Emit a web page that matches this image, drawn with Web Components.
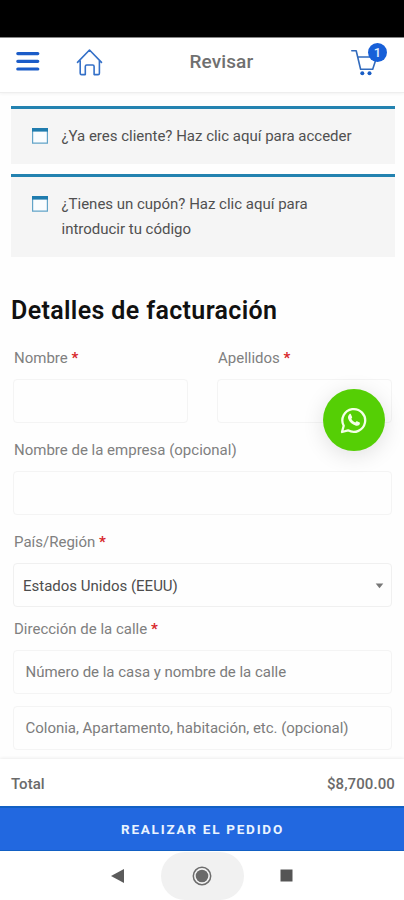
<!DOCTYPE html>
<html lang="es">
<head>
<meta charset="utf-8">
<title>Revisar</title>
<style>
html, body { margin: 0; height: 100%; overflow: hidden; background: #fff; }
body { font-family: Roboto, "Liberation Sans", sans-serif; }
</style>
</head>
<body>
<checkout-screen></checkout-screen>
<script>
function define(name, html) {
  const t = document.createElement('template');
  t.innerHTML = html;
  customElements.define(name, class extends HTMLElement {
    constructor() {
      super();
      this.attachShadow({ mode: 'open' }).append(t.content.cloneNode(true));
    }
  });
}

define('app-header', `
<style>
:host { display: grid; grid-template-columns: 173.5px auto 1fr; align-items: center; box-sizing: border-box; height: 55px; padding: 0 17px 6px 16px; background: #fff; border-bottom: 1px solid #eee; box-shadow: 0 1px 3px rgba(0,0,0,.05); }
.left { display: flex; align-items: center; gap: 36px; }
.title { font-size: 19px; font-weight: 500; color: #707070; letter-spacing: .1px; line-height: 24px; }
.cart { justify-self: end; position: relative; width: 36px; height: 34px; }
.badge { position: absolute; left: 17px; top: -2px; width: 19px; height: 19px; border-radius: 50%; background: #175fd8; color: #e4efff; font-size: 13px; line-height: 19px; font-weight: 500; text-align: center; }
.cart svg { margin-top: -2px; }
svg { display: block; fill: none; }
</style>
<div class="left">
<svg width="24" height="22" viewBox="0 0 24 22" stroke="#1b5cc8" stroke-width="3.2" stroke-linecap="round"><path d="M1.8 2.6h20M1.8 10.3h20M1.8 18h20"/></svg>
<svg width="28" height="30" viewBox="0 0 28 30" stroke="#3470c8" stroke-width="1.6" stroke-linejoin="round" stroke-linecap="round"><path d="M1.5 15.4L13.5 3l12 12.4M4.2 13.6V26.2q0 1.4 1.4 1.4H9.3V19.4q0-1.4 1.4-1.4h6q1.4 0 1.4 1.4v8.2h4q1.3 0 1.3-1.4V13.6"/></svg>
</div>
<span class="title">Revisar</span>
<div class="cart">
<svg width="36" height="34" viewBox="0 0 36 34" stroke="#326bbd" stroke-width="1.6" stroke-linejoin="round" stroke-linecap="round"><path d="M.8 7.8h4.4l4.4 18.4h12.1l4-12.2H6.8"/><circle cx="11.3" cy="30.2" r="2" fill="#195dc5" stroke="none"/><circle cx="18.5" cy="30.2" r="2" fill="#195dc5" stroke="none"/></svg>
<span class="badge">1</span>
</div>`);

define('info-notice', `
<style>
:host { display: flex; align-items: flex-start; gap: 13.5px; box-sizing: border-box; border-top: 3px solid #2382b0; background: #f5f5f5; padding: 14.5px 36px 15px 21px; font-size: 15px; line-height: 25.5px; color: #505050; letter-spacing: -.01px; }
svg { flex: none; margin-top: 4px; }
</style>
<svg width="16" height="16" viewBox="0 0 16 16"><path d="M.6 1h14.8v14.2H.6z" fill="#fafdff" stroke="#62a4c8" stroke-width="1.2"/><path d="M0 0h16v3.6H0z" fill="#1f7cae"/></svg>
<div><slot></slot></div>`);

define('form-field', `
<style>
:host { display: block; min-width: 0; }
.label { display: block; margin: 0 1px 10px 1px; font-size: 15px; line-height: 22px; color: #808080; white-space: nowrap; }
:host([bare]) .label { display: none; }
</style>
<span class="label"><slot name="label"></slot></span><slot></slot>`);

define('text-box', `
<style>
:host { display: flex; align-items: center; justify-content: space-between; box-sizing: border-box; height: 44px; margin-bottom: 1px; border: 1px solid #f4f4f4; border-radius: 4px; background: #fefefe; padding: 0 7px 0 11.5px; font-size: 15px; line-height: 22px; color: #7c7c7c; white-space: nowrap; letter-spacing: -.02px; }
:host([select]) { color: #4d4d4d; padding-left: 9px; padding-top: 1px; border-color: #f0f0f0; letter-spacing: 0; }
svg { display: none; }
:host([select]) svg { display: block; }
</style>
<span><slot></slot></span><svg width="9" height="6" viewBox="0 0 9 6"><path d="M.7.5h7.6L4.5 5.2z" fill="#777"/></svg>`);

define('billing-form', `
<style>
:host { display: block; padding: 38px 12px 0 11px; }
h3 { margin: 0; font-size: 25px; line-height: 32px; font-weight: 600; letter-spacing: .36px; color: #111; white-space: nowrap; }
.grid { display: grid; grid-template-columns: 175px 175px; justify-content: space-between; margin: 20px 0 0 2px; }
.full { grid-column: 1 / -1; }
b { color: #d8272b; }
</style>
<h3>Detalles de facturación</h3>
<div class="grid">
<form-field><span slot="label">Nombre <b>*</b></span><text-box></text-box></form-field>
<form-field><span slot="label">Apellidos <b>*</b></span><text-box></text-box></form-field>
<form-field class="full" style="margin-top:15px"><span slot="label">Nombre de la empresa (opcional)</span><text-box></text-box></form-field>
<form-field class="full" style="margin-top:15px"><span slot="label">País/Región <b>*</b></span><text-box select>Estados Unidos (EEUU)</text-box></form-field>
<form-field class="full" style="margin-top:10px"><span slot="label">Dirección de la calle <b>*</b></span><text-box>Número de la casa y nombre de la calle</text-box></form-field>
<form-field class="full" bare style="margin-top:11px"><text-box>Colonia, Apartamento, habitación, etc. (opcional)</text-box></form-field>
</div>`);

define('chat-button', `
<style>
:host { display: grid; place-items: center; width: 62px; height: 62px; border-radius: 50%; background: #55cf05; box-shadow: 0 4px 22px rgba(0,0,0,.12); }
</style>
<svg width="28" height="28" viewBox="0 0 28 28" fill="none"><path d="M2 26l1.7-6.2A11.4 11.4 0 1 1 8 24.3z" stroke="#f4ffe8" stroke-width="2.3" stroke-linejoin="round"/><path d="M9.4 8.2c.6-.5 1.2-.5 1.5.1l1.2 2.6c.2.5 0 .9-.8 1.8.9 1.8 2.2 3 4 3.8.8-1 1.2-1.5 1.7-1.3l2.7 1.3c.5.3.2 1.5-.3 2.2-.8.9-2.1 1.3-3.4 1-3.9-1-6.8-3.9-7.8-6.9-.5-1.6 0-3.5 1.2-4.6z" fill="#f4ffe8"/></svg>`);

define('order-bar', `
<style>
:host { display: block; background: #fff; box-shadow: 0 -1px 3px rgba(0,0,0,.07); }
.total { display: flex; justify-content: space-between; align-items: center; height: 47px; padding: 2px 9px 0 11px; box-sizing: border-box; font-size: 15px; font-weight: 500; color: #6a6a6a; }
.sum { letter-spacing: .1px; }
.go { display: flex; align-items: center; justify-content: center; height: 45px; box-sizing: border-box; border-top: 2px solid #1260c4; border-bottom: 1px solid #1260c4; background: #2268e0; color: #eaf4ff; font-size: 13.5px; font-weight: 700; letter-spacing: 1.76px; padding: 0 0 1px 1px; }
</style>
<div class="total"><span><slot name="label"></slot></span><span class="sum"><slot name="sum"></slot></span></div>
<div class="go"><span><slot></slot></span></div>`);

define('system-nav', `
<style>
:host { display: grid; grid-template-columns: 83px 83px 83px; justify-content: center; align-items: center; justify-items: center; height: 49px; background: #fff; overflow: hidden; }
.home { display: grid; place-items: center; width: 83px; height: 48px; border-radius: 24px; background: #f1f1f1; }
svg { display: block; }
.back { margin-right: 4px; }
.recent { margin-left: 2px; }
</style>
<svg class="back" width="13" height="14" viewBox="0 0 13 14"><path d="M0 7L13 0v14z" fill="#5b5b5b"/></svg>
<div class="home"><svg width="20" height="20" viewBox="0 0 20 20"><circle cx="10" cy="10" r="8.7" fill="#f5f5f5" stroke="#6d6d6d" stroke-width="1.5"/><circle cx="10" cy="10" r="6.3" fill="#6a6a6a"/></svg></div>
<svg class="recent" width="13" height="13" viewBox="0 0 13 13"><path d="M.5.5h12v12H.5z" fill="#555"/></svg>`);

define('checkout-screen', `
<style>
:host { display: flex; flex-direction: column; width: 404px; height: 900px; overflow: hidden; position: relative; background: #fefefe; }
.status { flex: none; height: 38px; background: #000; border-bottom: 1px solid #888; box-sizing: border-box; }
app-header, order-bar, system-nav { flex: none; }
main { flex: 1; min-height: 0; overflow: hidden; }
.notices { display: flex; flex-direction: column; gap: 10px; padding: 13px 9px 0 11px; }
.n1 { height: 58px; } .n2 { height: 83px; }
chat-button { position: absolute; left: 323px; top: 389px; }
</style>
<div class="status"></div>
<app-header></app-header>
<main>
<div class="notices">
<info-notice class="n1">¿Ya eres cliente? Haz clic aquí para acceder</info-notice>
<info-notice class="n2">¿Tienes un cupón? Haz clic aquí para introducir tu código</info-notice>
</div>
<billing-form></billing-form>
</main>
<order-bar><span slot="label">Total</span><span slot="sum">$8,700.00</span>REALIZAR EL PEDIDO</order-bar>
<system-nav></system-nav>
<chat-button></chat-button>`);
</script>
</body>
</html>
